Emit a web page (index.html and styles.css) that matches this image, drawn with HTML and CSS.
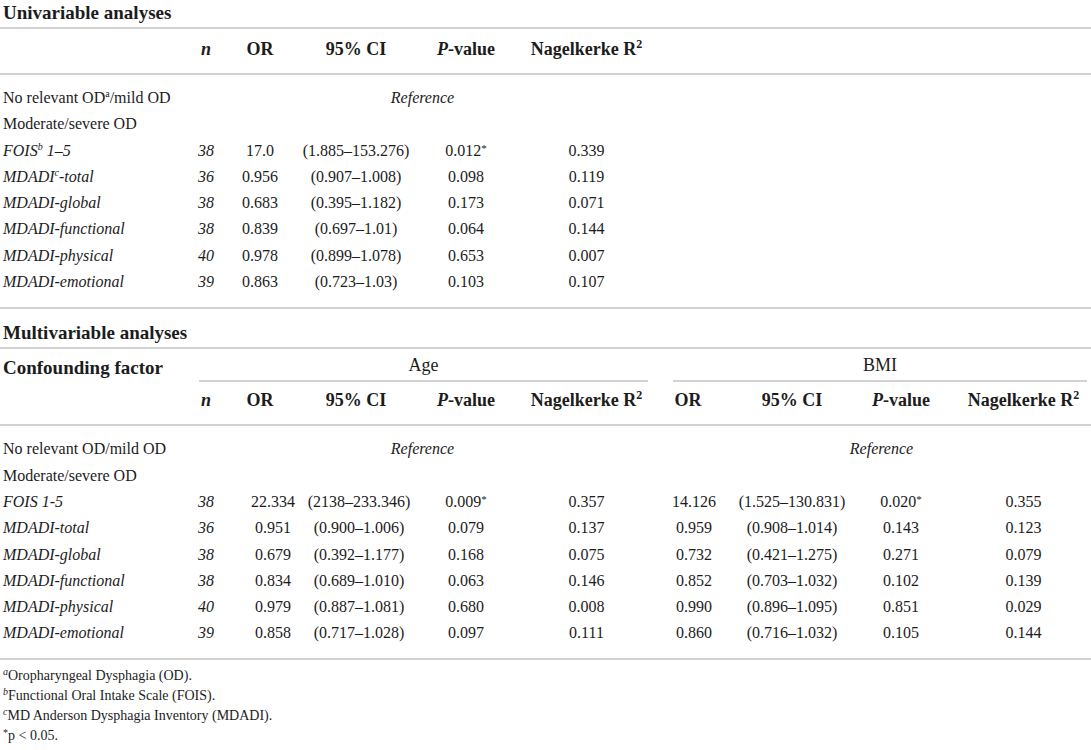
FILE: index.html
```
<!DOCTYPE html>
<html lang="en">
<head>
    <meta charset="UTF-8">
    <meta name="viewport" content="width=device-width, initial-scale=1.0">
    <link rel="stylesheet" href="styles.css">
    <title>Odds ratios</title>
</head>
<body>
    <table class="stats">
        <colgroup>
            <col class="c-label">
            <col class="c-n">
            <col class="c-or">
            <col class="c-ci">
            <col class="c-p">
            <col class="c-r2">
            <col class="c-or2">
            <col class="c-ci2">
            <col class="c-p2">
            <col class="c-r2b">
        </colgroup>

        <!-- univariable -->
        <tr class="title-row first">
            <td colspan="10">Univariable analyses</td>
        </tr>
        <tr class="head-row">
            <th></th>
            <th><i>n</i></th>
            <th>OR</th>
            <th>95% CI</th>
            <th><i>P</i>-value</th>
            <th>Nagelkerke R<sup>2</sup></th>
            <th colspan="4"></th>
        </tr>
        <tr class="row top">
            <td class="label">No relevant OD<sup class="fn">a</sup>/mild OD</td>
            <td colspan="5"><i>Reference</i></td>
            <td colspan="4"></td>
        </tr>
        <tr class="row">
            <td class="label">Moderate/severe OD</td>
            <td colspan="9"></td>
        </tr>
        <tr class="row">
            <td class="label"><i>FOIS<sup>b</sup> 1–5</i></td>
            <td><i>38</i></td><td>17.0</td><td>(1.885–153.276)</td><td>0.012<sup class="ast">*</sup></td><td>0.339</td>
            <td colspan="4"></td>
        </tr>
        <tr class="row">
            <td class="label"><i>MDADI<sup>c</sup>-total</i></td>
            <td><i>36</i></td><td>0.956</td><td>(0.907–1.008)</td><td>0.098</td><td>0.119</td>
            <td colspan="4"></td>
        </tr>
        <tr class="row">
            <td class="label"><i>MDADI-global</i></td>
            <td><i>38</i></td><td>0.683</td><td>(0.395–1.182)</td><td>0.173</td><td>0.071</td>
            <td colspan="4"></td>
        </tr>
        <tr class="row">
            <td class="label"><i>MDADI-functional</i></td>
            <td><i>38</i></td><td>0.839</td><td>(0.697–1.01)</td><td>0.064</td><td>0.144</td>
            <td colspan="4"></td>
        </tr>
        <tr class="row">
            <td class="label"><i>MDADI-physical</i></td>
            <td><i>40</i></td><td>0.978</td><td>(0.899–1.078)</td><td>0.653</td><td>0.007</td>
            <td colspan="4"></td>
        </tr>
        <tr class="row bottom">
            <td class="label"><i>MDADI-emotional</i></td>
            <td><i>39</i></td><td>0.863</td><td>(0.723–1.03)</td><td>0.103</td><td>0.107</td>
            <td colspan="4"></td>
        </tr>

        <!-- multivariable -->
        <tr class="title-row">
            <td colspan="10">Multivariable analyses</td>
        </tr>
        <tr class="group-row">
            <td class="label">Confounding factor</td>
            <td colspan="5"><div class="group age">Age</div></td>
            <td colspan="4"><div class="group bmi">BMI</div></td>
        </tr>
        <tr class="head-row">
            <th></th>
            <th><i>n</i></th>
            <th>OR</th>
            <th>95% CI</th>
            <th><i>P</i>-value</th>
            <th>Nagelkerke R<sup>2</sup></th>
            <th>OR</th>
            <th>95% CI</th>
            <th><i>P</i>-value</th>
            <th class="r2b">Nagelkerke R<sup>2</sup></th>
        </tr>
        <tr class="row top">
            <td class="label">No relevant OD/mild OD</td>
            <td colspan="5"><i>Reference</i></td>
            <td colspan="4" class="ref-bmi"><i>Reference</i></td>
        </tr>
        <tr class="row">
            <td class="label">Moderate/severe OD</td>
            <td colspan="9"></td>
        </tr>
        <tr class="row multi">
            <td class="label"><i>FOIS 1-5</i></td>
            <td><i>38</i></td><td class="or-m">22.334</td><td class="ci-m">(2138–233.346)</td><td>0.009<sup class="ast">*</sup></td><td>0.357</td>
            <td class="or-b">14.126</td><td>(1.525–130.831)</td><td>0.020<sup class="ast">*</sup></td><td class="r2b">0.355</td>
        </tr>
        <tr class="row multi">
            <td class="label"><i>MDADI-total</i></td>
            <td><i>36</i></td><td class="or-m">0.951</td><td class="ci-m">(0.900–1.006)</td><td>0.079</td><td>0.137</td>
            <td class="or-b">0.959</td><td>(0.908–1.014)</td><td>0.143</td><td class="r2b">0.123</td>
        </tr>
        <tr class="row multi">
            <td class="label"><i>MDADI-global</i></td>
            <td><i>38</i></td><td class="or-m">0.679</td><td class="ci-m">(0.392–1.177)</td><td>0.168</td><td>0.075</td>
            <td class="or-b">0.732</td><td>(0.421–1.275)</td><td>0.271</td><td class="r2b">0.079</td>
        </tr>
        <tr class="row multi">
            <td class="label"><i>MDADI-functional</i></td>
            <td><i>38</i></td><td class="or-m">0.834</td><td class="ci-m">(0.689–1.010)</td><td>0.063</td><td>0.146</td>
            <td class="or-b">0.852</td><td>(0.703–1.032)</td><td>0.102</td><td class="r2b">0.139</td>
        </tr>
        <tr class="row multi">
            <td class="label"><i>MDADI-physical</i></td>
            <td><i>40</i></td><td class="or-m">0.979</td><td class="ci-m">(0.887–1.081)</td><td>0.680</td><td>0.008</td>
            <td class="or-b">0.990</td><td>(0.896–1.095)</td><td>0.851</td><td class="r2b">0.029</td>
        </tr>
        <tr class="row multi bottom">
            <td class="label"><i>MDADI-emotional</i></td>
            <td><i>39</i></td><td class="or-m">0.858</td><td class="ci-m">(0.717–1.028)</td><td>0.097</td><td>0.111</td>
            <td class="or-b">0.860</td><td>(0.716–1.032)</td><td>0.105</td><td class="r2b">0.144</td>
        </tr>
    </table>

    <div class="notes">
        <p><sup class="note-mark">a</sup>Oropharyngeal Dysphagia (OD).</p>
        <p><sup class="note-mark">b</sup>Functional Oral Intake Scale (FOIS).</p>
        <p><sup class="note-mark">c</sup>MD Anderson Dysphagia Inventory (MDADI).</p>
        <p><sup class="note-ast">*</sup>p &lt; 0.05.</p>
    </div>
</body>
</html>
```

FILE: styles.css
```
* {
    margin: 0;
    padding: 0;
    box-sizing: border-box;
}
body {
    font-family: "Liberation Serif", "Times New Roman", serif;
    color: #1c1c1c;
    background: #fff;
    width: 1091px;
}

.stats {
    width: 1091px;
    border-collapse: collapse;
    table-layout: fixed;
}
.c-label { width: 187px; }
.c-n { width: 38px; }
.c-or { width: 70px; }
.c-ci { width: 122px; }
.c-p { width: 98px; }
.c-r2 { width: 143px; }
.c-or2 { width: 60px; }
.c-ci2 { width: 148px; }
.c-p2 { width: 70px; }
.c-r2b { width: 155px; }

.stats td,
.stats th {
    padding: 0;
    text-align: center;
    white-space: nowrap;
    font-size: 16px;
    font-weight: normal;
}
.stats .label {
    text-align: left;
    padding-left: 3px;
}

/* section titles */
.title-row td {
    text-align: left;
    padding: 2px 3px 3px;
    font-size: 19px;
    line-height: 22px;
    font-weight: bold;
    border-bottom: 2px solid #d2d2d2;
}
.title-row:not(.first) td {
    padding-top: 13px;
    padding-bottom: 3px;
}

/* column headings */
.head-row th {
    font-size: 18px;
    font-weight: bold;
    line-height: 22px;
    padding: 9px 0 13px;
    border-bottom: 2px solid #d2d2d2;
}
.head-row sup {
    font-size: 12px;
    vertical-align: 7px;
    line-height: 0;
}
.group-row .label {
    font-size: 19px;
    font-weight: bold;
    line-height: 22px;
    padding-top: 8px;
    padding-bottom: 6px;
}
.group {
    font-size: 18px;
    line-height: 22px;
    padding-top: 2px;
    padding-bottom: 4px;
    border-bottom: 2px solid #d2d2d2;
}
.group.age {
    margin: 0 10px 0 12px;
}
.group.bmi {
    margin: 0 4px 0 15px;
}
.group-row + .head-row th {
    padding-top: 4px;
}

/* data rows */
.row td {
    line-height: 26.3px;
}
.row.top td {
    padding-top: 10px;
}
.row.bottom td {
    padding-bottom: 12px;
    border-bottom: 2px solid #d2d2d2;
}
.row.multi.bottom td {
    padding-bottom: 11px;
}
.row sup {
    font-size: 10px;
    vertical-align: 6px;
    line-height: 0;
}
.row sup.ast {
    font-size: 11px;
    vertical-align: 4px;
}
.stats .or-m {
    padding-left: 26px;
}
.stats .ci-m {
    padding-left: 6px;
}
.stats .or-b {
    padding-left: 12px;
}
.stats .r2b {
    padding-left: 20px;
}
.stats .ref-bmi {
    padding-left: 14px;
}

/* footnotes */
.notes {
    padding: 6px 3px 0;
    font-size: 14px;
    line-height: 20px;
}
.note-mark {
    font-style: italic;
    font-size: 10px;
    vertical-align: 5px;
    line-height: 0;
}
.note-ast {
    font-size: 10px;
    vertical-align: 4px;
    line-height: 0;
}
```
